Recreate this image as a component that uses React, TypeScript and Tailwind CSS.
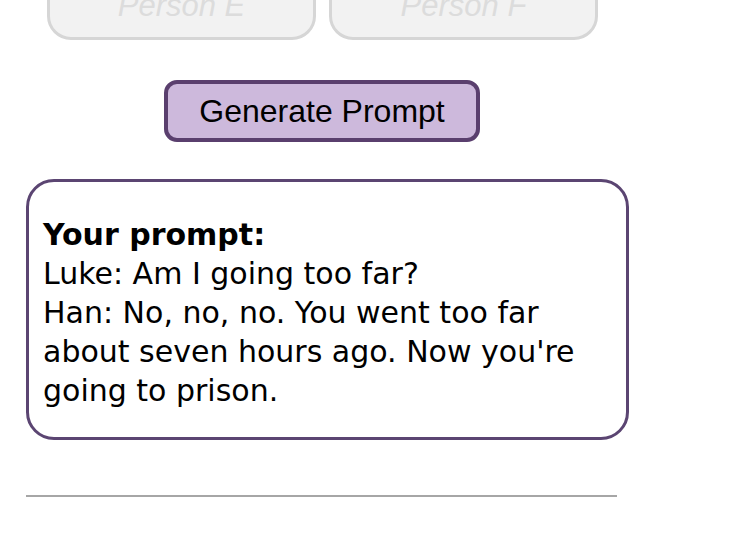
export default function App() {
  return (
    <div className="w-[750px] h-[536px] overflow-hidden bg-white pl-[26px]">
      <div className="flex gap-[13px] ml-[21px] -mt-[30px]">
        <div className="w-[269px] h-[70px] rounded-[24px] border-[3px] border-[#d6d6d6] bg-[#f2f2f2] flex items-center justify-center">
          <span className="italic text-[31px] text-[#dcdcdc] mt-[2px] font-['Liberation_Sans',Arial,sans-serif]">Person E</span>
        </div>
        <div className="w-[269px] h-[70px] rounded-[24px] border-[3px] border-[#d6d6d6] bg-[#f2f2f2] flex items-center justify-center">
          <span className="italic text-[31px] text-[#dcdcdc] mt-[2px] font-['Liberation_Sans',Arial,sans-serif]">Person F</span>
        </div>
      </div>
      <div className="ml-[138px] mt-[40px] w-[316px] h-[62px] rounded-[13px] border-[4px] border-[#5a3f6e] bg-[#cdb9dc] flex items-center justify-center">
        <span className="text-[32px] text-black font-['Liberation_Sans',Arial,sans-serif]">Generate Prompt</span>
      </div>
      <div className="mt-[37px] w-[603px] h-[261px] rounded-[28px] border-[3px] border-[#5b4572] bg-white pl-[14px] pr-[10px] pt-[33px] font-['DejaVu_Sans',Verdana,sans-serif] text-[30px] leading-[39px] text-black">
        <div className="font-bold">Your prompt:</div>
        <div>Luke: Am I going too far?</div>
        <div>Han: No, no, no. You went too far about seven hours ago. Now you're going to prison.</div>
      </div>
      <div className="mt-[55px] w-[591px] h-[2px] bg-[#a6a6a6]" />
    </div>
  );
}
